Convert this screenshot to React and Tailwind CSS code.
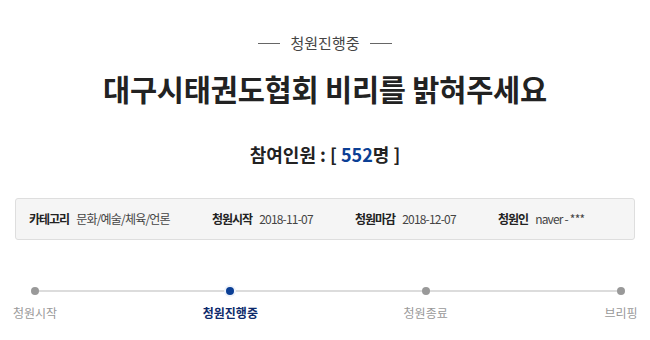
const font = { fontFamily: '"Noto Sans CJK KR", "Noto Sans", sans-serif' };

const steps = [
  { label: '청원시작', active: false },
  { label: '청원진행중', active: true },
  { label: '청원종료', active: false },
  { label: '브리핑', active: false },
];

function Meta({ label, value, className = '' }) {
  return (
    <div className={`flex items-center gap-[7px] ${className}`}>
      <span className="font-bold text-[#222] tracking-[-1px]">{label}</span>
      <span className="text-[#444] tracking-[-0.8px]">{value}</span>
    </div>
  );
}

export default function App() {
  return (
    <div className="w-[650px] h-[340px] bg-white overflow-hidden" style={font}>
      {/* Status */}
      <div className="flex items-center justify-center gap-[10px] pt-[31px] text-[15px] text-[#444]">
        <span className="block w-[22px] h-px bg-[#666]" />
        <span className="leading-[24px]">청원진행중</span>
        <span className="block w-[22px] h-px bg-[#666]" />
      </div>

      {/* Title */}
      <h1 className="mt-[13px] text-center text-[29.5px] leading-[40px] font-bold text-[#222] tracking-[-0.2px]">
        대구시태권도협회 비리를 밝혀주세요
      </h1>

      {/* Participants */}
      <p className="mt-[33px] text-center text-[18px] leading-[26px] font-bold text-[#222]">
        참여인원 : [ <span className="text-[#0b3f95]">552</span>명 ]
      </p>

      {/* Info box */}
      <div className="mx-[15px] mt-[31px] h-[42px] flex items-center pl-[13px] bg-[#f5f5f5] border border-[#dedede] rounded-[3px] text-[12px]">
        <Meta label="카테고리" value="문화/예술/체육/언론" className="w-[183px]" />
        <Meta label="청원시작" value="2018-11-07" className="w-[143px]" />
        <Meta label="청원마감" value="2018-12-07" className="w-[143px]" />
        <Meta label="청원인" value="naver - ***" />
      </div>

      {/* Progress */}
      <div className="relative ml-[35px] mr-[29px] mt-[47px]">
        <div className="absolute left-0 right-0 top-[3px] h-[2px] bg-[#dcdcdc]" />
        <div className="relative flex justify-between">
          {steps.map((s) => (
            <div key={s.label} className="w-0 flex flex-col items-center">
              <span
                className={`block shrink-0 w-[8px] h-[8px] rounded-full ${
                  s.active ? 'bg-[#0b3f95] ring-2 ring-[#eef3fb]' : 'bg-[#999]'
                }`}
              />
              <span
                className={`mt-[10px] text-[12px] leading-[16px] whitespace-nowrap ${
                  s.active ? 'font-bold text-[#0d2a6b]' : 'text-[#999]'
                }`}
              >
                {s.label}
              </span>
            </div>
          ))}
        </div>
      </div>
    </div>
  );
}
